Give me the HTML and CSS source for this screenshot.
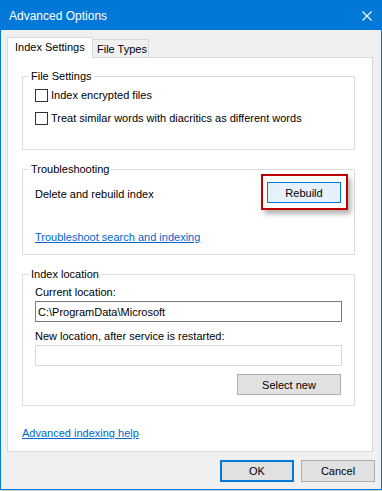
FILE: index.html
```html
<!DOCTYPE html>
<html lang="en">
<head>
    <meta charset="UTF-8">
    <title>Advanced Options</title>
    <link rel="stylesheet" href="styles.css">
</head>
<body>
    <div class="window">
        <div class="titlebar">
            <span class="title">Advanced Options</span>
            <svg class="close" width="10" height="10" viewBox="0 0 10 10"><path d="M0.5 0.5L9.5 9.5M9.5 0.5L0.5 9.5" stroke="#fff" stroke-width="1.1" fill="none"/></svg>
        </div>

        <div class="content">
            <!-- Tabs -->
            <div class="tabs">
                <div class="tab active">Index Settings</div>
                <div class="tab">File Types</div>
            </div>

            <div class="panel">
                <fieldset class="group group-files">
                    <legend>File Settings</legend>
                    <label class="check"><span class="box"></span>Index encrypted files</label>
                    <label class="check"><span class="box"></span>Treat similar words with diacritics as different words</label>
                </fieldset>

                <fieldset class="group group-trouble">
                    <legend>Troubleshooting</legend>
                    <div class="rebuild-row">
                        <span>Delete and rebuild index</span>
                        <span class="highlight"><button class="btn btn-rebuild">Rebuild</button></span>
                    </div>
                    <a class="link trouble-link" href="#">Troubleshoot search and indexing</a>
                </fieldset>

                <fieldset class="group group-location">
                    <legend>Index location</legend>
                    <div class="field-label">Current location:</div>
                    <input class="field" type="text" value="C:\ProgramData\Microsoft" readonly>
                    <div class="field-label second">New location, after service is restarted:</div>
                    <input class="field disabled" type="text" disabled>
                    <div class="select-row"><button class="btn btn-select">Select new</button></div>
                </fieldset>

                <a class="link help-link" href="#">Advanced indexing help</a>
            </div>

            <div class="footer">
                <button class="btn btn-default">OK</button>
                <button class="btn">Cancel</button>
            </div>
        </div>
    </div>
</body>
</html>
```

FILE: styles.css
```css
* { margin: 0; padding: 0; box-sizing: border-box; }
body { background: #d4d4d4; font-family: "Liberation Sans", Arial, sans-serif; font-size: 11px; line-height: 16px; color: #000; white-space: nowrap; }
.window { width: 382px; height: 490px; border: 1px solid #0078d7; background: #f0f0f0; display: flex; flex-direction: column; }

/* title bar */
.titlebar { height: 29px; background: #0078d7; color: #fff; font-size: 12px; display: flex; align-items: center; justify-content: space-between; padding: 0 9px 0 8px; }
.close { display: block; }

.content { flex: 1; padding-top: 7px; display: flex; flex-direction: column; }

/* tabs */
.tabs { display: flex; align-items: flex-end; margin: 0 8px -1px 6px; position: relative; z-index: 1; }
.tab { width: 56px; height: 18px; margin-bottom: 1px; border: 1px solid #d9d9d9; border-bottom: none; border-left: none; background: #f0f0f0; padding: 1px 0 0 4px; }
.tab.active { width: 86px; height: 21px; margin-bottom: 0; border-left: 1px solid #d9d9d9; background: #fff; padding: 1px 0 0 7px; }

.panel { height: 395px; margin: 0 8px 0 6px; background: #fff; border: 1px solid #d9d9d9; padding: 10px 17px 10px 14px; }

/* group boxes */
.group { border: 1px solid #dcdcdc; padding: 3px 12px 23px; }
.group legend { margin-left: -6px; padding: 0 2px; }
.group-trouble, .group-location { margin-top: 11px; }
.group-trouble { padding: 0 12px 9px; }
.group-location { padding: 2px 12px 10px; }

.check { display: flex; align-items: center; height: 16px; }
.check + .check { margin-top: 7px; }
.box { width: 13px; height: 13px; border: 1px solid #333; background: #fff; margin-right: 3px; }

.rebuild-row { display: flex; align-items: center; justify-content: space-between; height: 33px; }
.highlight { display: block; margin: -3px -6px 0 0; border: 2px solid #c00000; padding: 6px 5px 5px 4px; box-shadow: 3px 4px 5px rgba(0,0,0,0.3); background: #fff; }

.link { display: block; color: #0066cc; text-decoration: underline; width: max-content; }
.trouble-link { margin-top: 19px; }
.help-link { margin-top: 19px; }

.field { display: block; width: 100%; height: 21px; margin-top: 1px; border: 1px solid #7a7a7a; background: #fff; padding: 0 2px; font: inherit; color: #000; }
.field.disabled { border-color: #d9d9d9; }
.field-label.second { margin-top: 6px; }
.select-row { display: flex; justify-content: flex-end; margin-top: 8px; }

/* buttons */
.btn { width: 74px; height: 21px; font: inherit; color: #000; background: #e1e1e1; border: 1px solid #adadad; display: block; }
.btn-rebuild { background: #e5f1fb; border-color: #0078d7; }
.btn-select { width: 104px; margin-right: 1px; }
.footer { display: flex; justify-content: flex-end; gap: 7px; padding: 8px 6px 0; }
.footer .btn { height: 22px; }
.btn-default { border: 2px solid #0078d7; }
```
